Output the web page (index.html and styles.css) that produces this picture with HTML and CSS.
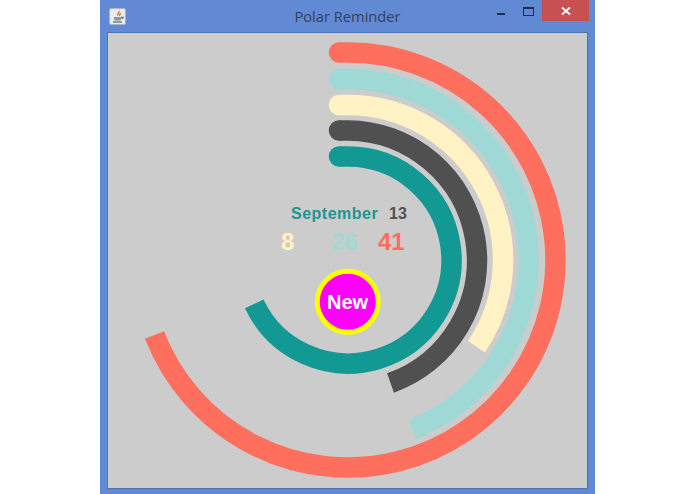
FILE: index.html
```html
<!DOCTYPE html>
<html lang="en">
<head>
    <meta charset="UTF-8">
    <title>Polar Reminder</title>
    <link rel="stylesheet" href="styles.css">
</head>
<body>
    <div class="window">
        <div class="titlebar">
            <div class="app-icon">
                <svg width="14" height="14" viewBox="0 0 14 14">
                    <path class="steam" d="M8 1c1 1.500-2.500 2.500-1 4.500M9.500 3c0 1-1.500 1.500-.8 3"/>
                    <path class="cup" d="M3 7h7v2c0 1-1 1.500-2 1.500H5C4 10.500 3 10 3 9z"/>
                    <path class="cup-line" d="M2 12h9M10 7.500h2l-1 1.500"/>
                </svg>
            </div>
            <div class="title">Polar Reminder</div>
            <div class="controls">
                <div class="btn-min"><span></span></div>
                <div class="btn-max"><span></span></div>
                <div class="btn-close">
                    <svg width="10" height="10" viewBox="0 0 10 10"><path d="M1 1.500l8 7M9 1.500l-8 7"/></svg>
                </div>
            </div>
        </div>
        <div class="canvas">
            <svg class="rings" viewBox="107 32 481 457" width="481" height="457">
                <path class="ring coral" d="M339 52.500H348A207.500 207.500 0 1 1 154.500 335"/>
                <circle class="cap coral-text" cx="339" cy="52.500" r="10.250"/>
                <path class="ring mint" d="M339 79H348A181 181 0 0 1 412.500 429"/>
                <circle class="cap mint-text" cx="339" cy="79" r="10.250"/>
                <path class="ring cream" d="M339 105H348A155 155 0 0 1 476.500 346.700"/>
                <circle class="cap cream-text" cx="339" cy="105" r="10.250"/>
                <path class="ring dark" d="M339 130.500H348A130 130 0 0 1 390.500 383"/>
                <circle class="cap dark-text" cx="339" cy="130.500" r="10.250"/>
                <path class="ring teal" d="M339 156.500H348A103.500 103.500 0 1 1 254.260 303.880"/>
                <circle class="cap teal-text" cx="339" cy="156.500" r="10.250"/>

                <text class="month" x="291" y="219">September</text>
                <text class="day" x="389" y="219">13</text>
                <text class="count cream-text" x="281" y="250">8</text>
                <text class="count mint-text" x="331" y="250">26</text>
                <text class="count coral-text" x="378" y="250">41</text>

                <circle class="new-btn" cx="347.800" cy="301.800" r="30.500"/>
                <text class="new-label" x="347.500" y="309">New</text>
            </svg>
        </div>
    </div>
</body>
</html>
```

FILE: styles.css
```css
* {
    margin: 0;
    padding: 0;
    box-sizing: border-box;
}

body {
    background: #fff;
    height: 494px;
    overflow: hidden;
}

.window {
    width: 495px;
    height: 494px;
    margin-left: 100px;
    padding: 0 7px 5px;
    background: #6289d4;
    display: flex;
    flex-direction: column;
}

.titlebar {
    height: 32px;
    flex: none;
    display: flex;
    align-items: flex-start;
    position: relative;
}

.app-icon {
    width: 17px;
    height: 17px;
    margin: 8px 0 0 2px;
    background: #e8ecf2;
    border: 1px solid #a9b4c6;
    border-radius: 2px;
    display: flex;
    align-items: center;
    justify-content: center;
}

.app-icon path {
    fill: none;
    stroke-width: 1.400;
}

.app-icon .cup {
    fill: #8a97a8;
    stroke: none;
}

.app-icon .steam {
    stroke: #e0742f;
}

.app-icon .cup-line {
    stroke: #6f7c8e;
}

.title {
    position: absolute;
    left: 0;
    right: 0;
    top: 6px;
    text-align: center;
    font-family: "Open Sans", sans-serif;
    font-size: 14.700px;
    line-height: 20px;
    color: #33415a;
}

.controls {
    margin-left: auto;
    margin-right: -1px;
    display: flex;
}

.btn-min {
    width: 26px;
    height: 21px;
    position: relative;
}

.btn-min span {
    position: absolute;
    left: 0;
    top: 13px;
    width: 8px;
    height: 2px;
    background: #1f2f4a;
}

.btn-max {
    width: 19px;
    height: 21px;
    position: relative;
}

.btn-max span {
    position: absolute;
    left: 0;
    top: 7px;
    width: 11px;
    height: 9px;
    border: 1px solid #1f2f4a;
    border-top-width: 2px;
}

.btn-close {
    width: 47px;
    height: 21px;
    background: #c75050;
    display: flex;
    align-items: center;
    justify-content: center;
}

.btn-close path {
    stroke: #fff;
    stroke-width: 1.800;
    fill: none;
}

.canvas {
    flex: 1;
    background: #cccccc;
    border: 1px solid #4f72b4;
    overflow: hidden;
}

.rings {
    display: block;
    margin: -1px;
}

.ring {
    fill: none;
    stroke-width: 20.500;
}

.coral { stroke: #ff6f5e; }
.mint { stroke: #9fd9d6; }
.cream { stroke: #fff2c4; }
.dark { stroke: #505050; }
.teal { stroke: #129994; }

.month,
.day,
.count,
.new-label {
    font-family: "Liberation Sans", Arial, sans-serif;
}

.month {
    font-size: 16px;
    font-weight: bold;
    letter-spacing: 0.500px;
    fill: #1f9590;
}

.day {
    font-size: 16px;
    font-weight: bold;
    fill: #505050;
}

.count {
    font-size: 24px;
    font-weight: bold;
}

.cream-text { fill: #fff2c4; }
.mint-text { fill: #9fd9d6; }
.coral-text { fill: #ff6f5e; }
.dark-text { fill: #505050; }
.teal-text { fill: #129994; }

.new-btn {
    fill: #ff00ff;
    stroke: #ffff00;
    stroke-width: 5px;
}

.new-label {
    font-size: 20px;
    font-weight: bold;
    fill: #fff;
    text-anchor: middle;
}
```
